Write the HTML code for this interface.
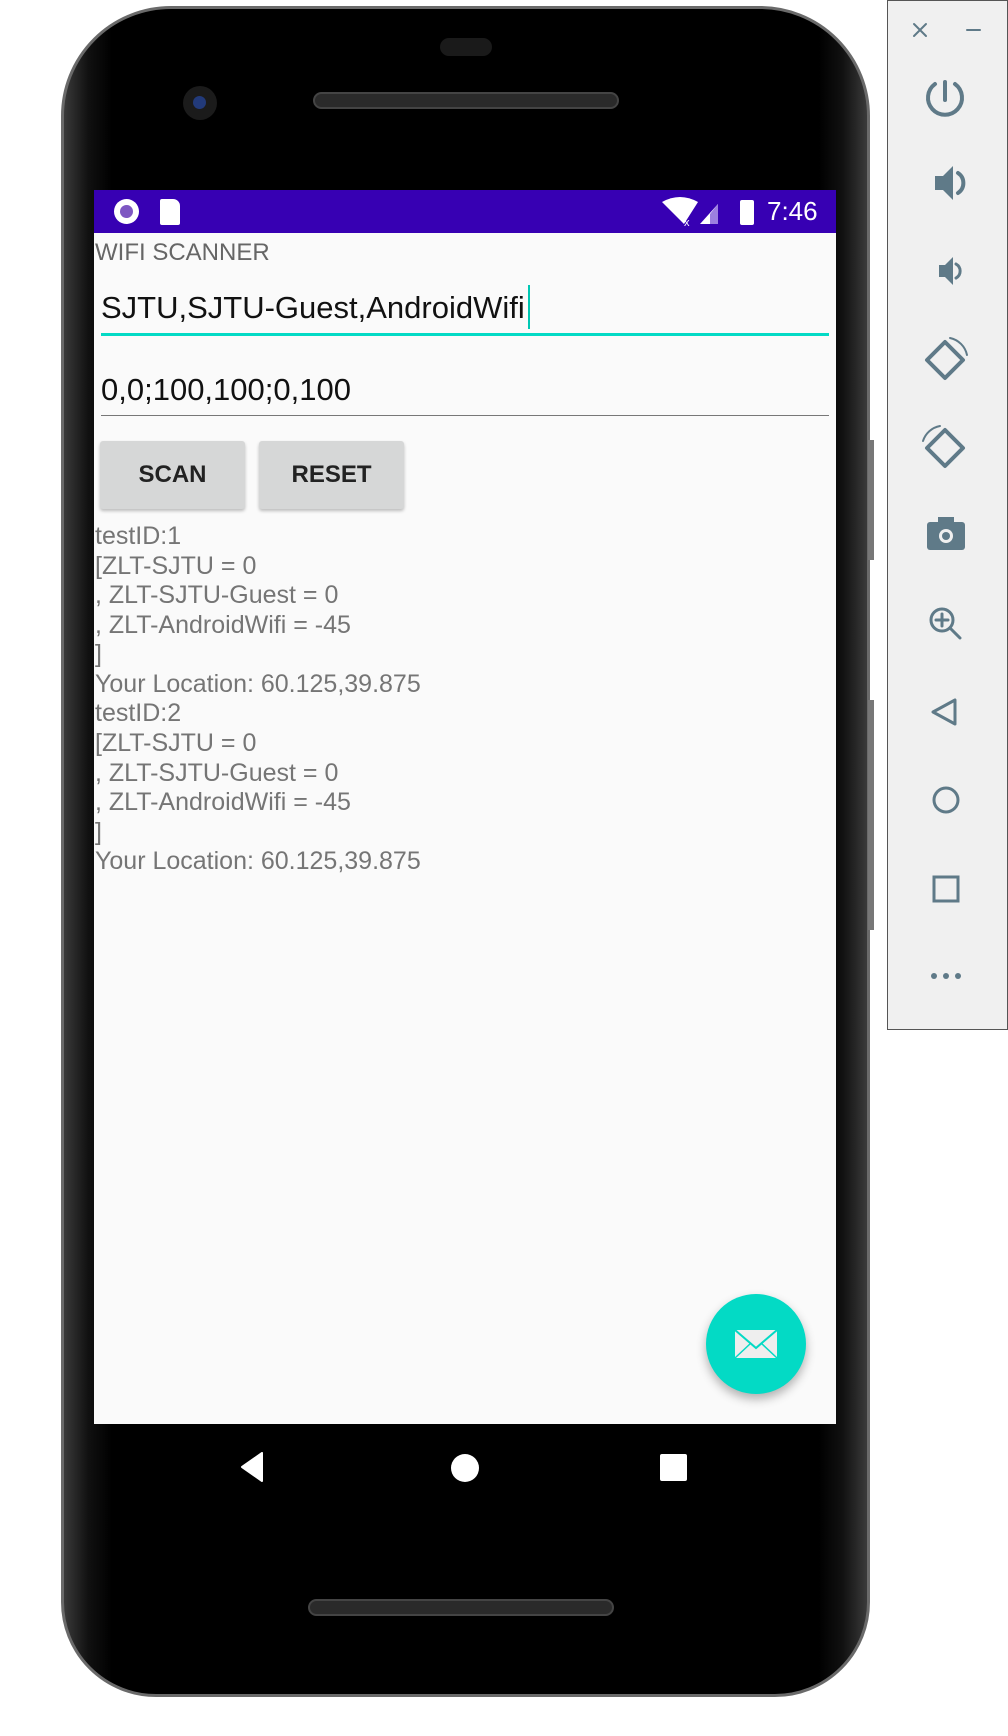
<!DOCTYPE html>
<html><head><meta charset="utf-8">
<style>
*{margin:0;padding:0;box-sizing:border-box}
html,body{width:1008px;height:1736px;background:#fff;overflow:hidden;font-family:"Liberation Sans",sans-serif}
.abs{position:absolute}
#phone{left:61px;top:6px;width:809px;height:1691px;border-radius:110px 110px 95px 95px;background:linear-gradient(90deg,#3a3a3a,#111 3%,#000 6%,#000 94%,#111 97%,#3a3a3a);border:3px solid #6a6a6a}
#screen{left:94px;top:190px;width:742px;height:1234px;background:#fafafa}
#sb{left:94px;top:190px;width:742px;height:43px;background:#3700b3}
.t{position:absolute;left:95px;color:#757575;font-size:25px;white-space:nowrap;line-height:30px}
.btn{position:absolute;top:441px;height:68px;width:145px;background:#d6d7d7;border-radius:3px;box-shadow:0 2px 3px rgba(0,0,0,.25);font-size:24px;font-weight:bold;color:#222;text-align:center;line-height:68px}
#panel{left:887px;top:0;width:121px;height:1030px;background:#f0f0f0;border:1px solid #555}
</style></head><body>
<div id="phone" class="abs"></div>
<div class="abs" style="left:440px;top:38px;width:52px;height:18px;border-radius:9px;background:#1a1a1a"></div>
<div class="abs" style="left:313px;top:92px;width:306px;height:17px;border-radius:9px;background:#2a2a2a;border:2px solid #444"></div>
<div class="abs" style="left:183px;top:86px;width:34px;height:34px;border-radius:50%;background:#1b1b1b"><div class="abs" style="left:10px;top:10px;width:13px;height:13px;border-radius:50%;background:#223a7a"></div></div>
<div class="abs" style="left:308px;top:1599px;width:306px;height:17px;border-radius:9px;background:#2a2a2a;border:2px solid #444"></div>
<div class="abs" style="left:868px;top:440px;width:6px;height:120px;background:#777"></div>
<div class="abs" style="left:868px;top:700px;width:6px;height:230px;background:#777"></div>

<div id="screen" class="abs"></div>
<div id="sb" class="abs"></div>
<div class="abs" style="left:114px;top:199px;width:25px;height:25px;border-radius:50%;background:#fff"><div class="abs" style="left:6px;top:6px;width:13px;height:13px;border-radius:50%;background:#7e57c2"></div></div>
<div class="abs" style="left:160px;top:199px;width:20px;height:26px;background:#fff;border-radius:2px 7px 2px 2px"></div>
<svg class="abs" style="left:660px;top:196px" width="72" height="32"><path d="M2 6 Q20 -4 38 6 L24 28 Z" fill="#fff"/><text x="24" y="30" fill="#fff" font-size="11" font-family="Liberation Sans">x</text><path d="M40 28 L58 8 L58 28Z" fill="#fff"/><path d="M50 18 L58 8 L58 28 L50 28Z" fill="#9c7fe0"/></svg>
<div class="abs" style="left:740px;top:200px;width:14px;height:25px;background:#fff;border-radius:2px"></div>
<div class="abs" style="left:767px;top:196px;color:#fff;font-size:26px">7:46</div>

<div class="t" style="top:238px;color:#666;font-size:24px">WIFI SCANNER</div>
<div class="abs" style="left:101px;top:290px;font-size:31px;color:#111;white-space:nowrap">SJTU,SJTU-Guest,AndroidWifi</div>
<div class="abs" style="left:528px;top:285px;width:2px;height:44px;background:#00c8b4"></div>
<div class="abs" style="left:101px;top:333px;width:728px;height:3px;background:#03dac5"></div>
<div class="abs" style="left:101px;top:372px;font-size:31px;color:#111">0,0;100,100;0,100</div>
<div class="abs" style="left:101px;top:415px;width:728px;height:1px;background:#777"></div>
<div class="btn" style="left:100px">SCAN</div>
<div class="btn" style="left:259px">RESET</div>

<div class="t" style="top:521px">testID:1</div>
<div class="t" style="top:551px">[ZLT-SJTU = 0</div>
<div class="t" style="top:580px">, ZLT-SJTU-Guest = 0</div>
<div class="t" style="top:610px">, ZLT-AndroidWifi = -45</div>
<div class="t" style="top:639px">]</div>
<div class="t" style="top:669px">Your Location: 60.125,39.875</div>
<div class="t" style="top:698px">testID:2</div>
<div class="t" style="top:728px">[ZLT-SJTU = 0</div>
<div class="t" style="top:758px">, ZLT-SJTU-Guest = 0</div>
<div class="t" style="top:787px">, ZLT-AndroidWifi = -45</div>
<div class="t" style="top:817px">]</div>
<div class="t" style="top:846px">Your Location: 60.125,39.875</div>

<div class="abs" style="left:706px;top:1294px;width:100px;height:100px;border-radius:50%;background:#03dac5;box-shadow:0 5px 10px rgba(0,0,0,.3)"></div>
<svg class="abs" style="left:734px;top:1328px" width="44" height="32"><rect x="1" y="2" width="42" height="28" fill="#eee"/><path d="M1 2 L22 20 L43 2" fill="none" stroke="#03dac5" stroke-width="2"/><path d="M1 30 L17 15 M43 30 L27 15" stroke="#03dac5" stroke-width="1.5"/></svg>

<svg class="abs" style="left:240px;top:1452px" width="24" height="30"><path d="M22 1 L22 29 L2 15 Z" fill="#fff" stroke="#fff" stroke-linejoin="round" stroke-width="2"/></svg>
<div class="abs" style="left:451px;top:1454px;width:28px;height:28px;border-radius:50%;background:#fff"></div>
<div class="abs" style="left:660px;top:1454px;width:27px;height:27px;background:#fff;border-radius:2px"></div>

<div id="panel" class="abs"></div>
<svg class="abs" style="left:887px;top:0" width="121" height="1030" fill="none" stroke="#5f7a88" stroke-width="4" stroke-linecap="round">
<path d="M27 24 L39 36 M39 24 L27 36" stroke-width="2"/>
<path d="M80 30 L93 30" stroke-width="2"/>
<path d="M58 82 L58 100" /><path d="M48 84 A17 17 0 1 0 68 84"/>
<path d="M48 176 L56 176 L66 166 L66 200 L56 190 L48 190 Z" fill="#5f7a88" stroke="none"/><path d="M71 173 A12 12 0 0 1 71 193"/>
<path d="M52 265 L58 265 L66 257 L66 285 L58 277 L52 277 Z" fill="#5f7a88" stroke="none"/><path d="M69 264 A8 8 0 0 1 69 278" stroke-width="3"/>
<path d="M40 360 L58 342 L76 360 L58 378 Z" stroke-linejoin="round"/><path d="M63 338 A22 22 0 0 1 80 355" stroke-width="2"/>
<path d="M40 448 L58 430 L76 448 L58 466 Z" stroke-linejoin="round"/><path d="M36 441 A22 22 0 0 1 53 426" stroke-width="2"/>
<rect x="40" y="522" width="38" height="28" rx="3" fill="#5f7a88" stroke="none"/><rect x="51" y="517" width="16" height="8" fill="#5f7a88" stroke="none"/><circle cx="59" cy="536" r="7" fill="#f0f0f0" stroke="none"/><circle cx="59" cy="536" r="4" fill="#5f7a88" stroke="none"/>
<circle cx="55" cy="620" r="11" stroke-width="3"/><path d="M63 628 L73 638 M55 614 L55 626 M49 620 L61 620" stroke-width="3"/>
<path d="M46 712 L68 700 L68 724 Z" stroke-width="3" stroke-linejoin="round"/>
<circle cx="59" cy="800" r="12" stroke-width="3"/>
<rect x="47" y="877" width="24" height="24" stroke-width="3"/>
<circle cx="47" cy="976" r="3" fill="#5f7a88" stroke="none"/><circle cx="59" cy="976" r="3" fill="#5f7a88" stroke="none"/><circle cx="71" cy="976" r="3" fill="#5f7a88" stroke="none"/>
</svg>
</body></html>
